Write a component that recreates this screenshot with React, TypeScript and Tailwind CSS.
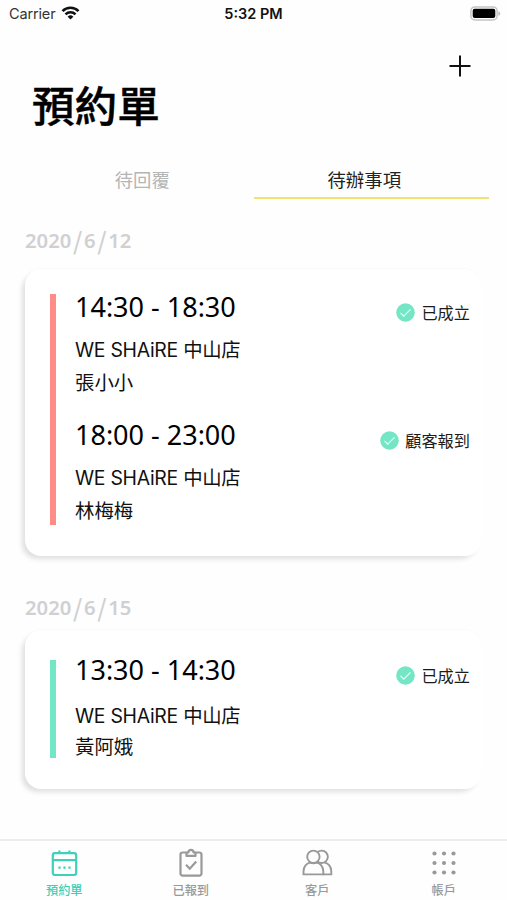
import type { ReactNode } from 'react';

type Booking = {
  time: string;
  shop: string;
  customer: string;
  status: string;
};

const FIRST_DAY: Booking[] = [
  { time: '14:30 - 18:30', shop: 'WE SHAiRE 中山店', customer: '張小小', status: '已成立' },
  { time: '18:00 - 23:00', shop: 'WE SHAiRE 中山店', customer: '林梅梅', status: '顧客報到' },
];

const SECOND_DAY: Booking = {
  time: '13:30 - 14:30',
  shop: 'WE SHAiRE 中山店',
  customer: '黃阿娥',
  status: '已成立',
};

function StatusBar() {
  return (
    <div className="flex h-7 items-center justify-between pl-[9px] pr-[6px]">
      <div className="flex w-[118px] items-center gap-[6px] text-[14.5px] text-[#333]">
        <span className="tracking-[-0.15px]">Carrier</span>
        <svg width="19" height="14" viewBox="0 0 18 14" className="-mt-0.5" fill="none" stroke="#111" strokeWidth="2.6">
          <path d="M1 5.1a11.4 11.4 0 0 1 16 0" />
          <path d="M4 8.3a7.1 7.1 0 0 1 10 0" />
          <path d="M9 13.6 6.1 10.7a4.1 4.1 0 0 1 5.8 0Z" fill="#111" stroke="none" />
        </svg>
      </div>
      <span className="text-[14.5px] font-semibold text-[#111]">5:32 PM</span>
      <div className="-mt-0.5 flex w-[121px] justify-end">
        <svg width="31" height="15" viewBox="0 0 31 15">
          <rect x=".9" y=".9" width="26.2" height="13" rx="4" fill="#fff" stroke="#c4c4c4" strokeWidth="1.5" />
          <rect x="2.7" y="2.7" width="22.6" height="9.4" rx="2" fill="#000" />
          <path d="M28.4 5.2c2.4.8 2.4 3.8 0 4.6Z" fill="#bbb" />
        </svg>
      </div>
    </div>
  );
}

function DateLabel({ parts }: { parts: [string, string, string] }) {
  return (
    <h2 className="flex h-[30px] items-center pl-[25px] font-['Noto_Sans','Noto_Sans_CJK_TC',sans-serif] text-[20.3px] font-semibold leading-[30px] text-[#d0d0d3]">
      <span>{parts[0]}</span>
      <Slash />
      <span>{parts[1]}</span>
      <Slash />
      <span>{parts[2]}</span>
    </h2>
  );
}

function Slash() {
  return (
    <span className="w-[12.6px] text-center font-['Noto_Sans_CJK_TC',sans-serif] text-[24px] font-medium">/</span>
  );
}

function Status({ label }: { label: string }) {
  return (
    <div className="flex h-6 items-center gap-[6px] text-[16.2px] leading-6 text-[#1c1c1c]">
      <svg width="19" height="19" viewBox="0 0 19 19" className="-mt-px" fill="none">
        <circle cx="9.5" cy="9.5" r="9.3" fill="#72e6c5" />
        <path d="m4.5 9.9 3.2 3.2 6.8-6.7" stroke="#e6fff7" strokeWidth="1.2" />
      </svg>
      <span>{label}</span>
    </div>
  );
}

function BookingRow({ booking, compact = false }: { booking: Booking; compact?: boolean }) {
  return (
    <div className="flex flex-1 justify-between">
      <div className="text-[19.4px] text-[#111]">
        <p className="h-[38px] font-['Noto_Sans',sans-serif] text-[27px] leading-[38px] text-black">{booking.time}</p>
        <p
          className={`tracking-[-0.27px] ${compact ? 'mt-[12px] h-[30px] leading-[30px]' : 'mt-[8px] h-[32px] leading-[32px]'}`}
        >
          {booking.shop}
        </p>
        <p className={compact ? 'h-[32px] leading-[32px]' : 'h-[34px] leading-[34px]'}>{booking.customer}</p>
      </div>
      <div className="pt-[13px]">
        <Status label={booking.status} />
      </div>
    </div>
  );
}

function Card({ children, className }: { children: ReactNode; className: string }) {
  return (
    <section
      className={`ml-[25px] mr-[26px] flex rounded-[16px] bg-white pl-[25px] pr-[11px] shadow-[-4px_4px_5px_-1px_rgba(0,0,0,0.12),0_-1px_1px_rgba(0,0,0,0.02)] ${className}`}
    >
      {children}
    </section>
  );
}

function CalendarIcon() {
  return (
    <svg width="27" height="28" viewBox="0 0 27 28" fill="none" stroke="currentColor" strokeWidth="2.2">
      <rect x="1.8" y="4.2" width="23.4" height="21.8" rx="2.2" />
      <path d="M2 11.2h23M8.4 1.5v3M18.4 1.5v3" />
      <path d="M7.4 18.6h2.2M12.4 18.6h2.2M17.4 18.6h2.2" />
    </svg>
  );
}

function ClipboardIcon() {
  return (
    <svg width="26" height="30" viewBox="0 0 26 30" fill="none" stroke="currentColor" strokeWidth="2.2">
      <path d="M8.5 4.5H4.7A2.2 2.2 0 0 0 2.5 6.7v18.8a2.2 2.2 0 0 0 2.2 2.2h16.6a2.2 2.2 0 0 0 2.2-2.2V6.7a2.2 2.2 0 0 0-2.2-2.2h-3.8" />
      <path d="M8.5 4.5h1.8c.4-3.4 5-3.4 5.4 0h1.8v3.4h-9Z" strokeLinejoin="round" />
      <path d="m8 16.8 3.8 3.9 6.4-7.2" />
    </svg>
  );
}

function PeopleIcon() {
  return (
    <svg width="31" height="30" viewBox="0 0 31 30" fill="none" stroke="currentColor" strokeWidth="1.9">
      <circle cx="11.4" cy="8.8" r="6.2" />
      <path d="M15.5 4.2a6.2 6.2 0 1 1 0 9.2" />
      <path d="M1.5 26.4v-3c0-4.7 3.2-8.2 6.6-8.8 2.1.8 4.5.8 6.6 0 3.4.6 6.6 4.1 6.6 8.8v3Z" />
      <path d="M22.5 14.6c3.8.6 6.8 4.1 6.8 8.8v3h-8" />
    </svg>
  );
}

function GridIcon() {
  const steps = [3, 12.5, 22];
  return (
    <svg width="25" height="26" viewBox="0 0 25 26" fill="currentColor">
      {steps.map((y) => steps.map((x) => <circle key={`${x}-${y}`} cx={x + 0.5} cy={y + 0.5} r="2.1" />))}
    </svg>
  );
}

const TABS = [
  { label: '預約單', icon: <CalendarIcon />, active: true },
  { label: '已報到', icon: <ClipboardIcon />, active: false },
  { label: '客戶', icon: <PeopleIcon />, active: false },
  { label: '帳戶', icon: <GridIcon />, active: false },
];

function TabBar() {
  return (
    <nav className="mt-auto grid h-[61px] grid-cols-4 border-t-2 border-[#ececec] pl-px">
      {TABS.map((tab) => (
        <div
          key={tab.label}
          className={`flex flex-col items-center ${tab.active ? 'text-[#3ed0b8]' : 'text-[#999]'}`}
        >
          <div className="mt-[6px] flex h-[32px] items-center justify-center">{tab.icon}</div>
          <span className="mt-[3px] text-[12.2px] font-medium leading-[18px]">{tab.label}</span>
        </div>
      ))}
    </nav>
  );
}

export default function App() {
  return (
    <div className="flex h-[900px] w-[507px] flex-col overflow-hidden bg-[#fefefe] font-['Inter','Noto_Sans_CJK_TC',sans-serif]">
      <StatusBar />

      <header className="h-[131px]">
        <div className="flex justify-end pr-[36px] pt-[27px]">
          <svg width="22" height="22" viewBox="0 0 22 22" stroke="#111" strokeWidth="2">
            <path d="M11 .5v21M.5 11h21" />
          </svg>
        </div>
        <h1 className="pl-[32px] text-[42.6px] font-medium leading-[60px] text-black [-webkit-text-stroke:0.4px_black]">
          預約單
        </h1>
      </header>

      <div className="mx-[18px] grid h-[40px] grid-cols-2 text-center text-[18.4px] leading-[42px]">
        <span className="pl-[13px] text-[#b5b5b5]">待回覆</span>
        <span className="h-[40px] border-b-2 border-[#f2e273] pr-[14px] text-[#222]">待辦事項</span>
      </div>

      <div className="mt-[26px]">
        <DateLabel parts={['2020', '6', '12']} />
      </div>
      <Card className="mt-[14px] h-[287px] pt-[19px]">
        <div className="mt-[6px] h-[231px] w-[6px] bg-[#ff8c87]" />
        <div className="ml-[19px] flex flex-1 flex-col">
          <div className="flex h-[128px]">
            <BookingRow booking={FIRST_DAY[0]} />
          </div>
          <div className="flex h-[128px]">
            <BookingRow booking={FIRST_DAY[1]} />
          </div>
        </div>
      </Card>

      <div className="mt-[36px]">
        <DateLabel parts={['2020', '6', '15']} />
      </div>
      <Card className="mt-[8px] h-[159px] pt-[21px]">
        <div className="mt-[9px] h-[98px] w-[6px] bg-[#72e6c5]" />
        <div className="ml-[19px] flex flex-1">
          <BookingRow booking={SECOND_DAY} compact />
        </div>
      </Card>

      <TabBar />
    </div>
  );
}
